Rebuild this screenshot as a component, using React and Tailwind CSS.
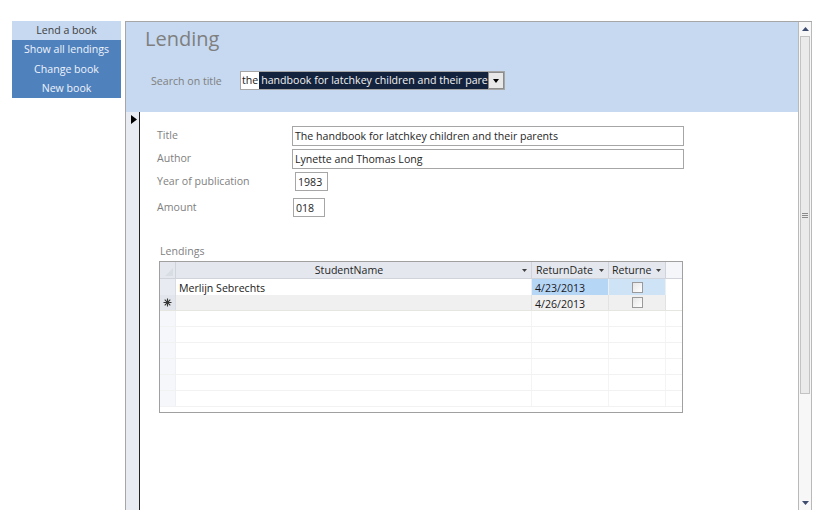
import React from "react";

const font = { fontFamily: '"Open Sans", "Noto Sans", sans-serif' };

function Menu() {
  return (
    <div className="pt-[21px] pl-[12px] w-[125px] shrink-0">
      <div className="w-[109px] text-[10.6px] leading-[19px] text-center">
        <div className="bg-[#c6d9f0] text-[#404040] h-[19px]">Lend a book</div>
        <div className="bg-[#4f81bd] text-[#eef3fa]">
          <div className="h-[19px] leading-[19px]">Show all lendings</div>
          <div className="h-[20px] leading-[20px]">Change book</div>
          <div className="h-[19px] leading-[18px]">New book</div>
        </div>
      </div>
    </div>
  );
}

function Scrollbar() {
  return (
    <div className="w-[14px] shrink-0 bg-[#f7f7f7] border-l border-r border-[#b9b9b9] flex flex-col">
      <div className="h-[14px] flex items-center justify-center">
        <svg width="7" height="4" viewBox="0 0 7 4"><path d="M0 4 L3.5 0 L7 4 Z" fill="#3c4b6e" /></svg>
      </div>
      <div className="h-[358px] mx-[1px] bg-[#eaeaea] border border-[#c2c2c2] flex items-center justify-center">
        <svg width="6" height="5" viewBox="0 0 6 5">
          <path d="M0 0.5 H6 M0 2.5 H6 M0 4.5 H6" stroke="#8a8a8a" strokeWidth="1" />
        </svg>
      </div>
      <div className="flex-1" />
      <div className="h-[14px] flex items-center justify-center">
        <svg width="7" height="4" viewBox="0 0 7 4"><path d="M0 0 L3.5 4 L7 0 Z" fill="#3c4b6e" /></svg>
      </div>
    </div>
  );
}

function Field({ label, value, width, ml, mt, h = 20 }) {
  return (
    <div className="flex items-start" style={{ marginTop: mt }}>
      <div className="w-[135px] text-[10.6px] text-[#7f7f7f] leading-[14px] pt-[2px] shrink-0">{label}</div>
      <div
        className="border border-[#a6a6a6] text-[10.6px] text-[#262626] leading-[16px] px-[2px] pt-[1px] bg-white whitespace-nowrap overflow-hidden"
        style={{ width, marginLeft: ml, height: h }}
      >
        {value}
      </div>
    </div>
  );
}

function Caret() {
  return (
    <svg width="5" height="3" viewBox="0 0 5 3" className="inline-block">
      <path d="M0 0 H5 L2.5 3 Z" fill="#404040" />
    </svg>
  );
}

function Star() {
  return (
    <svg width="9" height="9" viewBox="0 0 9 9">
      <path d="M4.5 0.5 V8.5 M0.5 4.5 H8.5 M1.7 1.7 L7.3 7.3 M7.3 1.7 L1.7 7.3" stroke="#333" strokeWidth="1.1" />
    </svg>
  );
}

function Grid() {
  const emptyRows = Array.from({ length: 6 });
  return (
    <div className="ml-[18px] w-[524px] h-[152px] border border-[#a0a0a0] bg-white overflow-hidden text-[10.6px] leading-[16px]">
      {/* header */}
      <div className="flex h-[17px] bg-[#e4e8ee] border-b border-[#d0d4da] text-[#262626]">
        <div className="w-[16px] shrink-0 relative border-r border-[#d0d4da]">
          <svg width="8" height="8" className="absolute right-[2px] bottom-[2px]" viewBox="0 0 8 8">
            <path d="M8 0 L8 8 L0 8 Z" fill="#d8dde4" />
          </svg>
        </div>
        <div className="w-[356px] shrink-0 border-r border-[#d0d4da] flex items-center">
          <div className="flex-1 text-center">StudentName</div>
          <div className="pr-[4px] flex items-center"><Caret /></div>
        </div>
        <div className="w-[77px] shrink-0 border-r border-[#d0d4da] flex items-center">
          <div className="flex-1 pl-[4px]">ReturnDate</div>
          <div className="pr-[4px] flex items-center"><Caret /></div>
        </div>
        <div className="w-[57px] shrink-0 border-r border-[#d0d4da] flex items-center">
          <div className="flex-1 pl-[3px]">Returne</div>
          <div className="pr-[4px] flex items-center"><Caret /></div>
        </div>
        <div className="flex-1 bg-[#f4f6f9]" />
      </div>
      {/* row 1 */}
      <div className="flex h-[16px] text-[#1a1a1a]">
        <div className="w-[16px] shrink-0 bg-[#e8ecf2] border-r border-[#d9dde3]" />
        <div className="w-[356px] shrink-0 pl-[3px] pt-[1px] bg-white border-r border-[#eceef1]">Merlijn Sebrechts</div>
        <div className="w-[77px] shrink-0 pl-[3px] pt-[1px] bg-[#b6d6f6] border-r border-[#eceef1]">4/23/2013</div>
        <div className="w-[57px] shrink-0 bg-[#cfe3f7] flex items-center justify-center border-r border-[#eceef1]">
          <div className="w-[11px] h-[11px] border border-[#9a9a9a] bg-gradient-to-br from-[#e6e6e6] to-white" />
        </div>
        <div className="flex-1 bg-white" />
      </div>
      {/* new row */}
      <div className="flex h-[16px] bg-[#f0f0f0] text-[#1a1a1a] border-b border-[#e6e6e0]">
        <div className="w-[16px] shrink-0 bg-[#e2e6ec] border-r border-[#d9dde3] flex items-center justify-center">
          <Star />
        </div>
        <div className="w-[356px] shrink-0 border-r border-[#e2e2e2]" />
        <div className="w-[77px] shrink-0 pl-[3px] pt-[1px] border-r border-[#e2e2e2]">4/26/2013</div>
        <div className="w-[57px] shrink-0 flex items-center justify-center border-r border-[#e2e2e2]">
          <div className="w-[11px] h-[11px] border border-[#9a9a9a] bg-gradient-to-br from-[#e6e6e6] to-white" />
        </div>
        <div className="flex-1 bg-white" />
      </div>
      {emptyRows.map((_, i) => (
        <div key={i} className="flex h-[16px] border-b border-[#f2f2f2]">
          <div className="w-[16px] shrink-0 bg-[#f5f7fa] border-r border-[#eef0f3]" />
          <div className="w-[356px] shrink-0 border-r border-[#f4f4f4]" />
          <div className="w-[77px] shrink-0 border-r border-[#f4f4f4]" />
          <div className="w-[57px] shrink-0 border-r border-[#f4f4f4]" />
          <div className="flex-1" />
        </div>
      ))}
    </div>
  );
}

export default function App() {
  return (
    <div className="w-[825px] h-[510px] bg-white flex overflow-hidden" style={font}>
      <Menu />
      <div className="mt-[21px] flex-1 flex border-t border-[#a6a6a6] mr-[13px]">
        <div className="flex-1 flex flex-col border-l border-[#a6a6a6]">
          {/* header */}
          <div className="h-[90px] bg-[#c6d9f0] shrink-0 pl-[19px]">
            <div className="pt-[3px] text-[20px] leading-[28px] text-[#7f7f7f]">Lending</div>
            <div className="flex items-center mt-[18px] ml-[6px]">
              <div className="w-[89px] text-[10.6px] text-[#7f7f7f] leading-[14px]">Search on title</div>
              <div className="flex h-[19px] border border-[#a6a6a6] bg-white">
                <div className="w-[247px] flex text-[10.6px] leading-[17px] items-center whitespace-nowrap overflow-hidden">
                  <span className="text-[#1a1a1a] pl-[1px] pr-[1px]">the</span>
                  <span className="bg-[#14233d] text-[#f2f2f2] pl-[2px] flex-1 h-full leading-[17px] overflow-hidden">handbook for latchkey children and their pare</span>
                </div>
                <div className="w-[16px] h-[17px] bg-[#e8e8e8] border border-[#8c8c8c] flex items-center justify-center">
                  <svg width="6" height="4" viewBox="0 0 6 4"><path d="M0 0 H6 L3 4 Z" fill="#000" /></svg>
                </div>
              </div>
            </div>
          </div>
          {/* body */}
          <div className="flex-1 flex">
            <div className="w-[14px] shrink-0 bg-[#e8ecf2] border-r border-[#222]">
              <svg width="6" height="9" viewBox="0 0 6 9" className="ml-[5px] mt-[3px]">
                <path d="M0 0 L6 4.5 L0 9 Z" fill="#000" />
              </svg>
            </div>
            <div className="flex-1 pl-[17px] pt-[14px]">
              <Field label="Title" value="The handbook for latchkey children and their parents" width={392} ml={0} mt={0} />
              <Field label="Author" value="Lynette and Thomas Long" width={392} ml={0} mt={3} />
              <Field label="Year of publication" value="1983" width={33} ml={3} mt={3} h={19} />
              <Field label="Amount" value="018" width={32} ml={1} mt={7} h={19} />
              <div className="mt-[27px] ml-[3px] text-[10.6px] text-[#7f7f7f] leading-[14px]">Lendings</div>
              <div className="mt-[3px] -ml-[16px]">
                <Grid />
              </div>
            </div>
          </div>
        </div>
        <Scrollbar />
      </div>
    </div>
  );
}
